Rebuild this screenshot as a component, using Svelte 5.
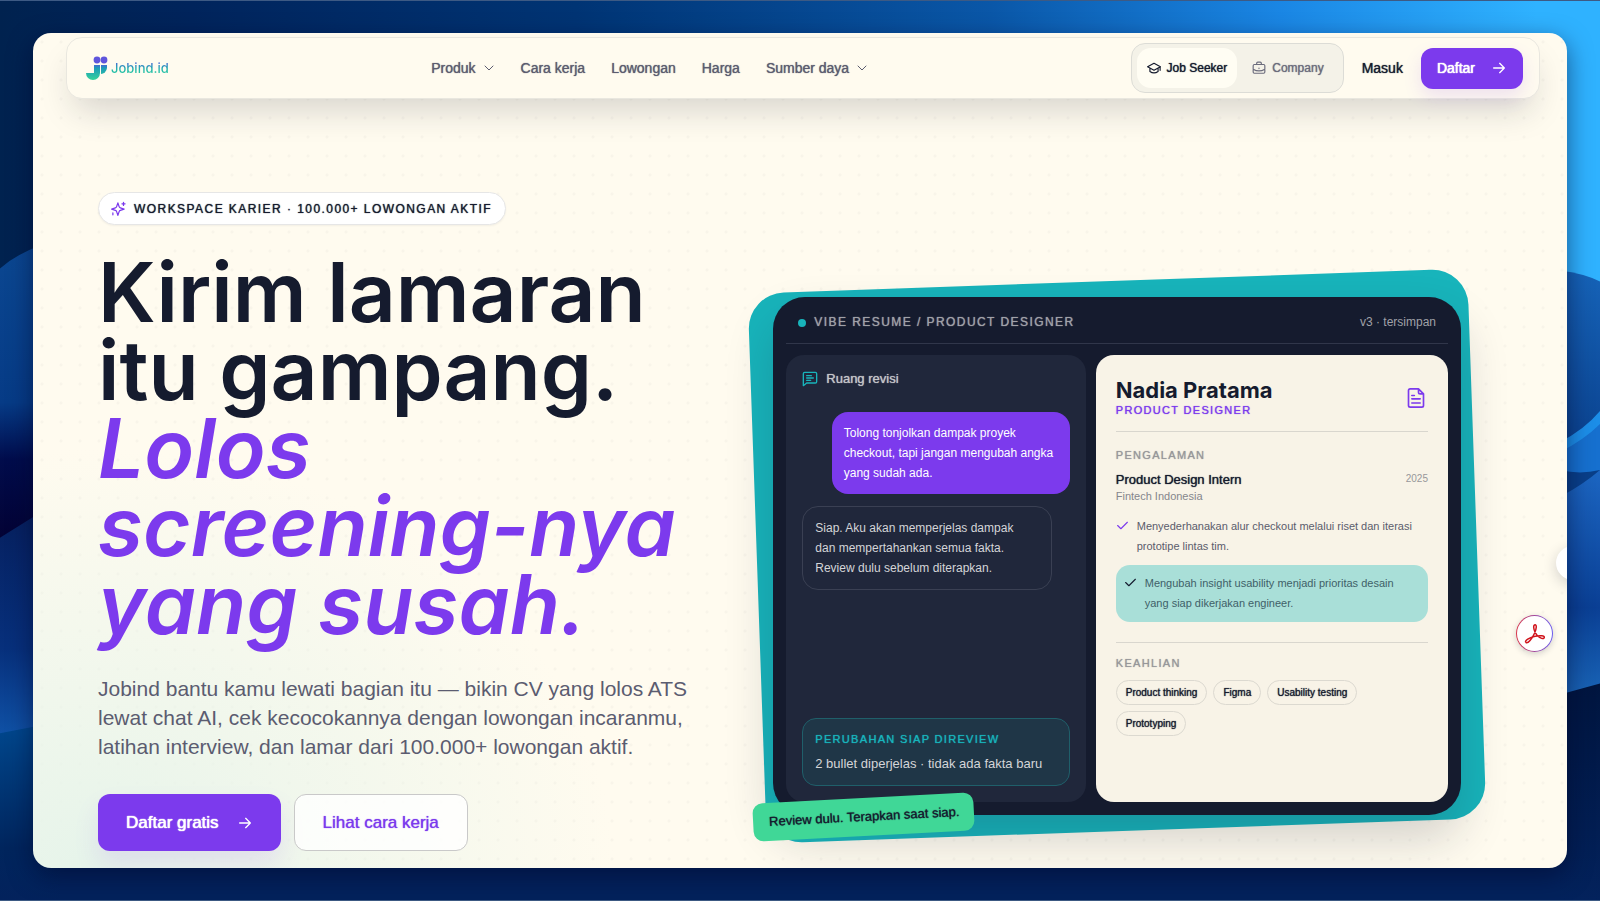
<script>
    let mode = $state('seeker');

    const links = [
        { label: 'Produk', menu: true },
        { label: 'Cara kerja' },
        { label: 'Lowongan' },
        { label: 'Harga' },
        { label: 'Sumber daya', menu: true }
    ];

    const bullets = [
        { text: 'Menyederhanakan alur checkout melalui riset dan iterasi prototipe lintas tim.', fresh: false },
        { text: 'Mengubah insight usability menjadi prioritas desain yang siap dikerjakan engineer.', fresh: true }
    ];

    const skills = ['Product thinking', 'Figma', 'Usability testing', 'Prototyping'];
</script>

{#snippet arrow()}
    <svg class="icon" width="16" height="16" viewBox="0 0 24 24"><path d="M4 12h16M13 5l7 7-7 7" /></svg>
{/snippet}

<div class="desktop">
    <svg class="wallpaper" viewBox="0 0 1600 901" preserveAspectRatio="none" aria-hidden="true">
        <defs>
            <linearGradient id="sky">
                <stop offset="0" stop-color="#00224f" />
                <stop offset="0.12" stop-color="#00245c" />
                <stop offset="0.36" stop-color="#003474" />
                <stop offset="0.62" stop-color="#0a57a8" />
                <stop offset="0.8" stop-color="#1a86e4" />
                <stop offset="0.96" stop-color="#2fb2ff" />
            </linearGradient>
            <linearGradient id="l1" x2="0" y2="1">
                <stop offset="0" stop-color="#0b4791" />
                <stop offset="0.5" stop-color="#063b86" />
                <stop offset="0.68" stop-color="#010c4c" />
                <stop offset="1" stop-color="#04002e" />
            </linearGradient>
            <linearGradient id="l2" x2="0" y2="1">
                <stop offset="0" stop-color="#06205f" />
                <stop offset="0.6" stop-color="#07307c" />
                <stop offset="1" stop-color="#1053a8" />
            </linearGradient>
            <linearGradient id="l3" x2="0" y2="1">
                <stop offset="0" stop-color="#00478d" />
                <stop offset="0.7" stop-color="#00255d" />
                <stop offset="1" stop-color="#03225c" />
            </linearGradient>
            <linearGradient id="r1" x2="0" y2="1">
                <stop offset="0" stop-color="#1663b8" />
                <stop offset="0.4" stop-color="#0b4390" />
                <stop offset="1" stop-color="#1263b4" />
            </linearGradient>
            <linearGradient id="r2" x2="0" y2="1">
                <stop offset="0" stop-color="#1c66c2" />
                <stop offset="0.6" stop-color="#0a3f94" />
                <stop offset="1" stop-color="#1a66b8" />
            </linearGradient>
            <linearGradient id="floor" x2="0" y2="1">
                <stop offset="0" stop-color="#00153f" />
                <stop offset="1" stop-color="#03225c" />
            </linearGradient>
        </defs>
        <rect width="1600" height="901" fill="url(#sky)" />
        <rect x="30" y="500" width="1540" height="401" fill="#03225c" />
        <path d="M0 268Q16 254 40 245V560H0z" fill="url(#l1)" />
        <path d="M0 538Q16 528 40 513V740H0z" fill="url(#l2)" />
        <path d="M0 734L40 726H60V901H0z" fill="url(#l3)" />
        <path d="M1560 270Q1584 273 1600 281V700H1560z" fill="url(#r1)" />
        <path d="M1560 442Q1584 430 1600 411V480H1560z" fill="#1c8ee8" />
        <path d="M1560 452Q1584 440 1600 424V480H1560z" fill="#1670cf" />
        <path d="M1560 470Q1580 475 1600 470V500H1560z" fill="#093f89" />
        <path d="M1560 497Q1584 484 1600 470V700H1560z" fill="url(#r2)" />
        <path d="M1560 695L1600 684V901H1560z" fill="url(#floor)" />
    </svg>

    <div class="window">
        <header>
            <a class="logo" href="#home" aria-label="Jobind.id">
                <svg width="22" height="24" viewBox="0 0 22 24" aria-hidden="true">
                    <defs>
                        <linearGradient id="mark" x2="0" y2="24" gradientUnits="userSpaceOnUse">
                            <stop offset="0.3" stop-color="#5b4fe0" />
                            <stop offset="0.5" stop-color="#1c9bb8" />
                            <stop offset="1" stop-color="#36d39b" />
                        </linearGradient>
                    </defs>
                    <circle cx="11" cy="4" r="3.4" fill="#5f55dc" />
                    <circle cx="18" cy="4" r="3.4" fill="#5f55dc" />
                    <path d="M8 9h6v8a7 7 0 0 1-7 7a7 7 0 0 1-7-7h7V17h1z" fill="url(#mark)" />
                    <path d="M15 9h6v3a6 7 0 0 1-6 6z" fill="url(#mark)" />
                </svg>
                <span>Jobind.id</span>
            </a>

            <nav>
                {#each links as link}
                    <a class="faux" href="#{link.label}">
                        {link.label}
                        {#if link.menu}
                            <svg class="icon" width="12" height="12" viewBox="0 0 24 24"><path d="M4 8l8 8 8-8" /></svg>
                        {/if}
                    </a>
                {/each}
            </nav>

            <div class="account">
                <div class="switch">
                    <button class="faux" class:active={mode === 'seeker'} onclick={() => (mode = 'seeker')}>
                        <svg class="icon" width="14" height="14" viewBox="0 0 24 24"><path d="M12 4L1 10l11 6 11-6zM5 12v6q7 5 14 0v-6M22.500 10v6" /></svg>
                        Job Seeker
                    </button>
                    <button class="faux" class:active={mode === 'company'} onclick={() => (mode = 'company')}>
                        <svg class="icon" width="14" height="14" viewBox="0 0 24 24"><path d="M4 6h16q2 0 2 2v11q0 2-2 2H4q-2 0-2-2V8q0-2 2-2zM8 6V4q0-2 2-2h4q2 0 2 2v2M2 14q10 6 20 0M12 12v1" /></svg>
                        Company
                    </button>
                </div>
                <a class="login faux" href="#masuk">Masuk</a>
                <a class="signup faux" href="#daftar">Daftar {@render arrow()}</a>
            </div>
        </header>

        <main>
            <section class="intro">
                <p class="eyebrow faux">
                    <svg class="icon" width="15" height="15" viewBox="0 0 24 24"><path d="M11 3l2 6q.5 1.500 2 2l6 2-6 2q-1.500.5-2 2l-2 6-2-6q-.5-1.500-2-2l-6-2 6-2q1.500-.5 2-2zM20 2v5M17.500 4.500h5M3 19v3" /></svg>
                    WORKSPACE KARIER · 100.000+ LOWONGAN AKTIF
                </p>
                <h1>Kirim lamaran<br />itu gampang.<br /><em>Lolos<br />screening-nya<br />yang susah.</em></h1>
                <p class="lead">
                    Jobind bantu kamu lewati bagian itu — bikin CV yang lolos ATS lewat chat AI, cek kecocokannya dengan
                    lowongan incaranmu, latihan interview, dan lamar dari 100.000+ lowongan aktif.
                </p>
                <div class="actions">
                    <a class="primary faux" href="#daftar">Daftar gratis {@render arrow()}</a>
                    <a class="secondary faux" href="#cara-kerja">Lihat cara kerja</a>
                </div>
            </section>

            <section class="preview">
                <div class="card">
                    <div class="card-head">
                        <span class="doc faux"><i></i>VIBE RESUME / PRODUCT DESIGNER</span>
                        <span class="version">v3 · tersimpan</span>
                    </div>
                    <div class="panels">
                        <div class="chat">
                            <h2 class="faux">
                                <svg class="icon" width="16" height="16" viewBox="0 0 24 24"><path d="M4 2h16q2 0 2 2v12q0 2-2 2H7l-5 4V4q0-2 2-2zM7 7h7M7 10.500h10M7 14h6" /></svg>
                                Ruang revisi
                            </h2>
                            <p class="mine">Tolong tonjolkan dampak proyek checkout, tapi jangan mengubah angka yang sudah ada.</p>
                            <p class="reply">Siap. Aku akan memperjelas dampak dan mempertahankan semua fakta. Review dulu sebelum diterapkan.</p>
                            <div class="ready">
                                <strong class="faux">PERUBAHAN SIAP DIREVIEW</strong>
                                <p>2 bullet diperjelas · tidak ada fakta baru</p>
                            </div>
                        </div>

                        <article class="resume">
                            <div class="person">
                                <div>
                                    <h2>Nadia Pratama</h2>
                                    <p class="role faux">PRODUCT DESIGNER</p>
                                </div>
                                <svg class="icon" width="20" height="20" viewBox="0 0 24 24"><path d="M5 1h10l6 6v14q0 2-2 2H5q-2 0-2-2V3q0-2 2-2zM15 1v4q0 2 2 2h4M7 9h3M7 13h10M7 18h10" /></svg>
                            </div>
                            <h3 class="faux">PENGALAMAN</h3>
                            <div class="job">
                                <strong class="faux">Product Design Intern</strong>
                                <time>2025</time>
                            </div>
                            <p class="firm">Fintech Indonesia</p>
                            <ul class="bullets">
                                {#each bullets as bullet}
                                    <li class:fresh={bullet.fresh}>
                                        <svg class="icon" width="13" height="13" viewBox="0 0 24 24"><path d="M3 12l6 6L21 6" /></svg>
                                        <span>{bullet.text}</span>
                                    </li>
                                {/each}
                            </ul>
                            <h3 class="skills-title faux">KEAHLIAN</h3>
                            <ul class="skills">
                                {#each skills as skill}
                                    <li class="faux">{skill}</li>
                                {/each}
                            </ul>
                        </article>
                    </div>
                </div>
                <p class="note faux">Review dulu. Terapkan saat siap.</p>
            </section>
        </main>

        <button class="tab" aria-label="Buka panel"></button>
        <button class="pdf" aria-label="Adobe Acrobat">
            <svg width="22" height="22" viewBox="0 0 22 22"><path d="M10.500 2c2.500-1 2.300 3.500-.2 8.700C8 15.700 4 20.700 2 19.500c-2-1.700 3.700-5.300 9.200-6.300 4.800-.9 9.300-.6 9.100 1.300-.2 2.200-4.400.8-7.300-2.200C10.200 9.300 8.700 2.900 10.500 2z" /></svg>
        </button>
    </div>
</div>

<style>
    :global(body) {
        font-family: "Liberation Sans", Arial, sans-serif;
        color: #151b2e;
    }

    h1, h2, h3, p, ul {
        margin: 0;
        padding: 0;
    }

    a {
        color: inherit;
        text-decoration: none;
    }

    button {
        font-family: inherit;
        border: 0;
        background: none;
        cursor: pointer;
    }

    .faux {
        font-weight: 400;
        text-shadow: 0 0 1px currentColor;
    }

    .icon {
        flex: none;
        fill: none;
        stroke: currentColor;
        stroke-width: 2;
        stroke-linecap: round;
        stroke-linejoin: round;
    }

    .desktop {
        position: relative;
        display: flex;
        box-sizing: border-box;
        min-height: 100vh;
        padding: 32px 33px;
        border-top: 1px solid #3d5a84;
        border-bottom: 1px solid #3d5a84;
    }

    .wallpaper {
        position: absolute;
        inset: 0;
        width: 100%;
        height: 100%;
    }

    .window {
        position: relative;
        flex: 1;
        min-width: 0;
        overflow: hidden;
        padding-top: 4px;
        border-radius: 18px;
        background:
            radial-gradient(ellipse 520px 420px at 4% 100%, #e6f4ea 0%, #fffbef00 100%),
            radial-gradient(circle at 9px 9px, #151b2e07 1px, #151b2e00 2px) 0 0 / 19px 19px,
            #fffbef;
        box-shadow: 0 8px 24px #00082c88;
    }

    header {
        display: flex;
        align-items: center;
        justify-content: space-between;
        box-sizing: border-box;
        height: 62px;
        margin: 0 27px 0 33px;
        padding: 0 16px 0 19px;
        border: 1px solid #e9e7df;
        border-radius: 16px;
        background: #fffbef;
        box-shadow: 0 18px 34px -8px #151b2e2e;
    }

    .logo {
        display: flex;
        align-items: center;
        gap: 3px;
    }

    .logo span {
        font: 500 13px/20px Inter, sans-serif;
        background: linear-gradient(#4a63d8 20%, #1fb3ac 55%, #2fcf9f 90%);
        background-clip: text;
        -webkit-text-fill-color: transparent;
    }

    nav {
        display: flex;
        gap: 26px;
        font-size: 14px;
        color: #5b5c6f;
    }

    nav a {
        display: flex;
        align-items: center;
        gap: 7px;
    }

    .account {
        display: flex;
        align-items: center;
        gap: 18px;
        font-size: 14px;
    }

    .switch {
        display: flex;
        box-sizing: border-box;
        height: 50px;
        padding: 4px 5px;
        border: 1px solid #dcdcd6;
        border-radius: 14px;
        background: #f4f2e8;
    }

    .switch button {
        display: flex;
        align-items: center;
        gap: 6px;
        padding: 0 14px 0 15px;
        border-radius: 14px;
        font-size: 12px;
        color: #6b6c7c;
    }

    .switch .active {
        padding: 0 10px;
        background: #fffdf3;
        color: #151b2e;
    }

    .signup {
        display: flex;
        align-items: center;
        gap: 16px;
        height: 41px;
        padding: 0 16px;
        border-radius: 12px;
        background: #7c3aed;
        box-shadow: 0 8px 18px #7c3aed22;
        color: #fff;
    }

    .signup, .primary {
        text-shadow: 0 0 1px #fff, 0 0 1px #fff;
    }

    main {
        display: grid;
        grid-template-columns: 8fr 9fr;
        gap: 64px;
        align-items: end;
        padding: 93px 106px 17px 65px;
    }

    .eyebrow {
        display: flex;
        align-items: center;
        gap: 8px;
        box-sizing: border-box;
        width: max-content;
        height: 33px;
        padding: 0 13px 0 12px;
        border: 1px solid #e6e6e6;
        border-radius: 17px;
        background: #fff;
        box-shadow: 0 1px 2px #151b2e0d;
        font-size: 12px;
        letter-spacing: 0.12em;
    }

    .eyebrow .icon {
        color: #7c3aed;
    }

    h1 {
        margin-top: 29px;
        font: 600 82px/78px Inter, sans-serif;
        white-space: nowrap;
    }

    h1 em {
        color: #7c3aed;
    }

    .lead {
        margin-top: 30px;
        font-size: 21px;
        line-height: 29px;
        color: #5b5c70;
    }

    .actions {
        display: flex;
        gap: 13px;
        margin-top: 33px;
        font-size: 17px;
    }

    .actions a {
        display: flex;
        align-items: center;
        gap: 18px;
        box-sizing: border-box;
        height: 57px;
        padding: 0 28px;
        border-radius: 12px;
    }

    .actions .primary {
        background: #7c3aed;
        box-shadow: 0 14px 26px #7c3aed1c;
        color: #fff;
    }

    .actions .secondary {
        border: 1px solid #c9c9c9;
        background: #fffc;
        color: #7c3aed;
    }

    .preview {
        position: relative;
        margin-bottom: 36px;
    }

    .preview::before {
        content: "";
        position: absolute;
        inset: -16px;
        border-radius: 36px;
        background: #18b4bb;
        transform: rotate(-2deg);
    }

    .card {
        position: relative;
        display: flex;
        flex-direction: column;
        box-sizing: border-box;
        min-height: 518px;
        padding: 13px;
        border-radius: 32px;
        background: #151b2e;
        box-shadow: 0 24px 48px #151b2e30;
    }

    .card-head {
        display: flex;
        justify-content: space-between;
        padding: 5px 12px 13px;
        border-bottom: 1px solid #30364a;
        font-size: 12px;
        line-height: 15px;
        color: #a0a1a8;
    }

    .doc {
        display: flex;
        align-items: center;
        gap: 8px;
        letter-spacing: 0.12em;
    }

    .doc i {
        width: 8px;
        height: 8px;
        border-radius: 50%;
        background: #18b4bb;
    }

    .panels {
        display: grid;
        flex: 1;
        grid-template-columns: 17fr 20fr;
        gap: 10px;
        margin-top: 11px;
    }

    .chat {
        display: flex;
        flex-direction: column;
        align-items: flex-start;
        padding: 16px;
        border-radius: 18px;
        background: #20273b;
        font-size: 12px;
        line-height: 20px;
        color: #d4d5d8;
    }

    .chat h2 {
        display: flex;
        align-items: center;
        gap: 8px;
        font-size: 13px;
        line-height: 16px;
        color: #c4c5c9;
    }

    .chat h2 .icon {
        color: #18b4bb;
    }

    .mine {
        box-sizing: border-box;
        width: 238px;
        align-self: flex-end;
        margin-top: 25px;
        padding: 11px 12px;
        border-radius: 16px;
        background: #7c3aed;
        color: #fff;
    }

    .reply {
        box-sizing: border-box;
        width: 250px;
        margin-top: 12px;
        padding: 11px 24px 11px 12px;
        border: 1px solid #3a4053;
        border-radius: 16px;
    }

    .ready {
        align-self: stretch;
        margin-top: auto;
        padding: 10px 12px 11px;
        border: 1px solid #1f5f6a;
        border-radius: 14px;
        background: #1f3647;
    }

    .ready strong {
        font-size: 11px;
        letter-spacing: 0.12em;
        color: #18b4bb;
    }

    .ready p {
        margin-top: 5px;
        font-size: 13px;
    }

    .resume {
        padding: 22px 20px;
        border-radius: 18px;
        background: #f8f3e7;
    }

    .person {
        display: flex;
        align-items: center;
        justify-content: space-between;
        padding: 0 2px 13px 0;
        border-bottom: 1px solid #d9d6ce;
    }

    .person h2 {
        font: 700 22px/26px Inter, sans-serif;
    }

    .person .icon {
        color: #7c3aed;
    }

    .role {
        font-size: 11px;
        line-height: 15px;
        letter-spacing: 0.12em;
        color: #7c3aed;
    }

    h3 {
        margin-top: 16px;
        font-size: 11px;
        line-height: 14px;
        letter-spacing: 0.12em;
        color: #97979a;
    }

    .job {
        display: flex;
        justify-content: space-between;
        margin-top: 9px;
        font-size: 13px;
        line-height: 18px;
    }

    .job time {
        font-size: 10px;
        line-height: 16px;
        color: #97979a;
    }

    .firm {
        font-size: 11px;
        line-height: 14px;
        color: #85868c;
    }

    ul {
        list-style: none;
    }

    .bullets {
        margin-top: 5px;
        font-size: 11px;
        line-height: 20px;
        color: #5b5c6c;
    }

    .bullets li {
        display: flex;
        gap: 8px;
        padding: 8px 0 9px;
    }

    .bullets .icon {
        margin-top: 3px;
        color: #7c3aed;
    }

    .bullets .fresh {
        padding: 8px 8px 9px;
        border-radius: 14px;
        background: #a9dfd8;
        color: #3f5f68;
    }

    .fresh .icon {
        color: #151b2e;
    }

    .skills-title {
        margin-top: 20px;
        padding-top: 13px;
        border-top: 1px solid #d9d6ce;
    }

    .skills {
        display: flex;
        flex-wrap: wrap;
        gap: 6px;
        margin-top: 10px;
        padding-right: 60px;
    }

    .skills li {
        padding: 0 9px;
        border: 1px solid #dcd9d0;
        border-radius: 13px;
        font-size: 10px;
        line-height: 23px;
    }

    .note {
        position: absolute;
        left: -20px;
        bottom: -21px;
        padding: 0 14px 0 16px;
        border-radius: 10px;
        background: #40d797;
        font-size: 13px;
        line-height: 38px;
        transform: rotate(-3deg);
    }

    .tab {
        position: absolute;
        top: 513px;
        right: -23px;
        width: 34px;
        height: 34px;
        border-radius: 50%;
        background: #fff;
        box-shadow: 0 4px 14px #151b2e30;
    }

    .pdf {
        position: absolute;
        right: 14px;
        top: 582px;
        display: grid;
        place-items: center;
        box-sizing: border-box;
        width: 37px;
        height: 37px;
        padding: 0;
        border: 1px solid transparent;
        border-radius: 50%;
        background:
            linear-gradient(#fff, #fff) padding-box,
            linear-gradient(90deg, #d9364a, #6a5cf0) border-box;
        box-shadow: 0 2px 6px #151b2e30;
    }

    .pdf path {
        fill: none;
        stroke: #d0141c;
        stroke-width: 1.5;
    }
</style>
